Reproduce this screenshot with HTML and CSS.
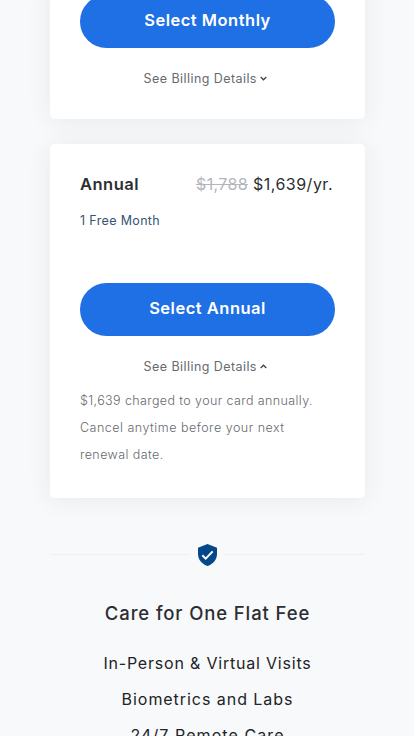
FILE: index.html
```html
<!DOCTYPE html>
<html lang="en">
<head>
<meta charset="utf-8">
<title>Membership plans</title>
<link rel="stylesheet" href="styles.css">
</head>
<body>
<main class="page">
  <section class="card card-monthly">
    <button class="select monthly">Select Monthly</button>
    <div class="details"><span>See Billing Details</span><svg class="chevron" viewBox="0 0 7 5"><path d="M.7 1l2.8 2.8L6.3 1"/></svg></div>
  </section>
  <section class="card card-annual">
    <header class="plan"><h2 class="name">Annual</h2><p class="price"><s>$1,788</s> <span>$1,639/yr.</span></p></header>
    <p class="offer">1 Free Month</p>
    <button class="select annual">Select Annual</button>
    <div class="details"><span>See Billing Details</span><svg class="chevron" viewBox="0 0 7 5"><path d="M.7 4l2.8-2.8L6.3 4"/></svg></div>
    <p class="terms"><span class="t1">$1,639 charged to your card annually.</span><br><span class="t2">Cancel anytime before your next</span><br><span class="t3">renewal date.</span></p>
  </section>
  <div class="divider"><svg class="shield" viewBox="0 0 19 22"><path d="M9.500 0L19 3.700V10c0 5.400-3.700 10-9.500 12C3.700 20 0 15.400 0 10V3.700z" fill="#05488a"/><path d="M4.300 11.200l3.400 3.400 7-7.200" fill="none" stroke="#fff" stroke-width="2"/></svg></div>
  <h1 class="title">Care for One Flat Fee</h1>
  <ul class="features">
    <li class="f1">In-Person &amp; Virtual Visits</li>
    <li class="f2">Biometrics and Labs</li>
    <li class="f3">24/7 Remote Care</li>
  </ul>
</main>
</body>
</html>
```
FILE: styles.css
```css
* { box-sizing: border-box; }
body { margin: 0; background: #f8f9fb; font-family: Inter, sans-serif; color: #2d2e32; }
h1, h2, p, ul { margin: 0; padding: 0; }
.page { height: 736px; overflow: hidden; padding: 0 49px 0 50px; display: flex; flex-direction: column; }
.card { flex: none; background: #fff; border-radius: 5px; box-shadow: 0 2px 24px rgba(35, 45, 60, .08); padding: 0 30px; display: flex; flex-direction: column; }
.card-monthly { height: 139px; margin-top: -20px; padding-top: 15px; }
.card-annual { height: 354px; margin-top: 25px; padding-top: 28px; }
.select { flex: none; height: 53px; border: 0; border-radius: 27px; padding: 0 0 4px; background: #1f6fe5; color: #fff; font: 600 16.500px/24px Inter, sans-serif; letter-spacing: .5px; }
.details { display: flex; justify-content: center; align-items: center; gap: 3.500px; height: 20px; margin-top: 20px; padding-right: 4px; font-size: 12.500px; letter-spacing: .43px; color: #666a70; }
.chevron { width: 7px; height: 5px; margin-top: 1px; fill: none; stroke: #3e4248; stroke-width: 1.300; }
.plan { display: flex; justify-content: space-between; height: 24px; line-height: 24px; padding-right: 2px; }
.name { font-size: 16.500px; font-weight: 600; letter-spacing: .5px; }
.price { font-size: 16px; letter-spacing: .5px; white-space: nowrap; }
.price s { color: #b2b5bb; letter-spacing: .35px; }
.offer { height: 20px; margin: 15px 0 52px; font-size: 12.500px; line-height: 20px; letter-spacing: .35px; color: #345574; }
.terms { margin-top: 11px; font-size: 12.500px; line-height: 27px; font-weight: 300; color: #666a70; white-space: nowrap; }
.t1 { letter-spacing: .39px; }
.t2 { letter-spacing: .5px; }
.t3 { letter-spacing: .42px; }
.divider { flex: none; height: 22px; margin-top: 46px; display: flex; align-items: center; gap: 8px; }
.divider::before, .divider::after { content: ""; flex: 1; height: 1px; margin-bottom: 2px; background: #eef0f2; }
.shield { width: 19px; height: 22px; }
.title { margin-top: 32px; font-size: 18.500px; line-height: 30px; font-weight: 500; letter-spacing: .88px; text-align: center; }
.features { list-style: none; margin-top: 17px; font-size: 16px; line-height: 36px; text-align: center; color: #222326; white-space: nowrap; }
.f1 { letter-spacing: .8px; }
.f2 { letter-spacing: .95px; }
.f3 { letter-spacing: 1.080px; }
```
